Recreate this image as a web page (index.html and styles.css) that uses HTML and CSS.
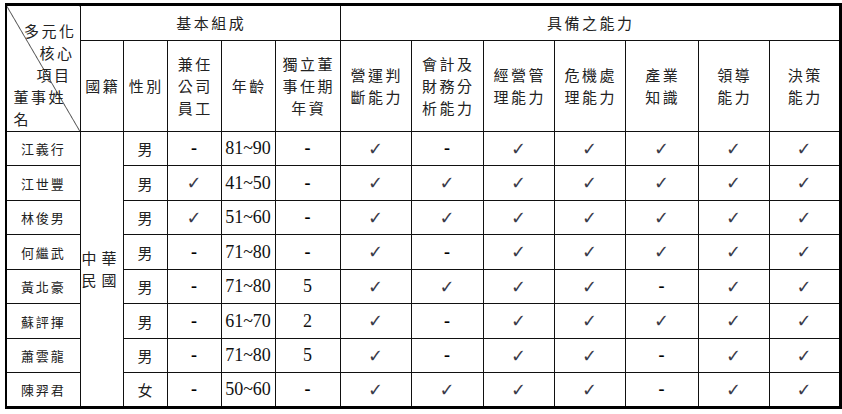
FILE: index.html
```html
<!DOCTYPE html>
<html lang="zh-Hant">
<head>
<meta charset="utf-8">
<title>董事會成員多元化</title>
<link rel="stylesheet" href="styles.css">
</head>
<body>
<div class="page">
<table class="board">
<colgroup>
<col class="w74"><col class="w43"><col class="w44"><col class="w54"><col class="w54"><col class="w65">
<col class="w71"><col class="w72"><col class="w71"><col class="w71"><col class="w73"><col class="w71"><col class="w71">
</colgroup>
<thead>
<tr class="hr1">
<th rowspan="2" class="diag"><div class="diag-text"><span class="r">多元化</span><span class="r r2">核心</span><span class="r r3">項目</span><span class="l">董事姓</span><span class="l">名</span></div></th>
<th colspan="5" class="grp">基本組成</th>
<th colspan="7" class="grp">具備之能力</th>
</tr>
<tr class="hr2">
<th class="gray">國籍</th>
<th>性別</th>
<th>兼任<br>公司<br>員工</th>
<th>年齡</th>
<th>獨立董<br>事任期<br>年資</th>
<th class="gray">營運判<br>斷能力</th>
<th class="gray">會計及<br>財務分<br>析能力</th>
<th>經營管<br>理能力</th>
<th class="gray">危機處<br>理能力</th>
<th>產業<br>知識</th>
<th>領導<br>能力</th>
<th>決策<br>能力</th>
</tr>
</thead>
<tbody>
<tr class="r34"><td class="name">江義行</td><td rowspan="8" class="nation">中華<br>民國</td><td class="cjk">男</td><td class="dash">-</td><td class="num">81~90</td><td class="dash">-</td><td class="chk gray">✓</td><td class="dash gray">-</td><td class="chk">✓</td><td class="chk gray">✓</td><td class="chk">✓</td><td class="chk">✓</td><td class="chk">✓</td></tr>
<tr class="r35"><td class="name">江世豐</td><td class="cjk">男</td><td class="chk">✓</td><td class="num">41~50</td><td class="dash">-</td><td class="chk gray">✓</td><td class="chk gray">✓</td><td class="chk">✓</td><td class="chk gray">✓</td><td class="chk">✓</td><td class="chk">✓</td><td class="chk">✓</td></tr>
<tr class="r34"><td class="name">林俊男</td><td class="cjk">男</td><td class="chk">✓</td><td class="num">51~60</td><td class="dash">-</td><td class="chk gray">✓</td><td class="chk gray">✓</td><td class="chk">✓</td><td class="chk gray">✓</td><td class="chk">✓</td><td class="chk">✓</td><td class="chk">✓</td></tr>
<tr class="r35"><td class="name">何繼武</td><td class="cjk">男</td><td class="dash">-</td><td class="num">71~80</td><td class="dash">-</td><td class="chk gray">✓</td><td class="dash gray">-</td><td class="chk">✓</td><td class="chk gray">✓</td><td class="chk">✓</td><td class="chk">✓</td><td class="chk">✓</td></tr>
<tr class="r34"><td class="name">黃北豪</td><td class="cjk">男</td><td class="dash">-</td><td class="num">71~80</td><td class="num">5</td><td class="chk gray">✓</td><td class="chk gray">✓</td><td class="chk">✓</td><td class="chk gray">✓</td><td class="dash">-</td><td class="chk">✓</td><td class="chk">✓</td></tr>
<tr class="r35"><td class="name">蘇評揮</td><td class="cjk">男</td><td class="dash">-</td><td class="num">61~70</td><td class="num">2</td><td class="chk gray">✓</td><td class="dash gray">-</td><td class="chk">✓</td><td class="chk gray">✓</td><td class="chk">✓</td><td class="chk">✓</td><td class="chk">✓</td></tr>
<tr class="r34"><td class="name">蕭雲龍</td><td class="cjk">男</td><td class="dash">-</td><td class="num">71~80</td><td class="num">5</td><td class="chk gray">✓</td><td class="dash gray">-</td><td class="chk">✓</td><td class="chk gray">✓</td><td class="dash">-</td><td class="chk">✓</td><td class="chk">✓</td></tr>
<tr class="r35"><td class="name">陳羿君</td><td class="cjk">女</td><td class="dash">-</td><td class="num">50~60</td><td class="dash">-</td><td class="chk gray">✓</td><td class="chk gray">✓</td><td class="chk">✓</td><td class="chk gray">✓</td><td class="dash">-</td><td class="chk">✓</td><td class="chk">✓</td></tr>
</tbody>
</table>
</div>
</body>
</html>
```

FILE: styles.css
```css
html, body {
  margin: 0;
  padding: 0;
  background: #ffffff;
}

.page {
  padding: 3px 0 0 5px;
}

.board {
  border-collapse: collapse;
  table-layout: fixed;
  width: 834px;
  border-top: 3px solid #000;
  border-bottom: 3px solid #000;
  border-right: 3px solid #000;
  border-left: 2px solid #000;
  font-family: "Noto Sans CJK TC", "Noto Sans CJK SC", sans-serif;
  color: #222;
}

.w74 { width: 74px; }
.w43 { width: 43px; }
.w44 { width: 44px; }
.w54 { width: 54px; }
.w65 { width: 65px; }
.w71 { width: 71px; }
.w72 { width: 72px; }
.w73 { width: 73px; }

.board th,
.board td {
  border: 1px solid #111;
  padding: 0;
  text-align: center;
  vertical-align: middle;
  overflow: hidden;
}

.board th {
  font-weight: 400;
  font-size: 15px;
  line-height: 22px;
  letter-spacing: 2.5px;
  padding-left: 2.5px;
}

.board .gray {
  border-left-color: #8a8a8a;
}

.hr1 { height: 36px; }
.hr2 { height: 91px; }
.r34 { height: 34px; }
.r35 { height: 35px; }

.grp {
  letter-spacing: 4px;
}

.diag {
  border-right-color: #9a9a9a;
  background: linear-gradient(to top right, transparent calc(50% - 0.7px), #222 50%, transparent calc(50% + 0.7px));
  vertical-align: top;
}

.diag-text {
  display: flex;
  flex-direction: column;
  padding: 12px 3px 0 4px;
  line-height: 22px;
  letter-spacing: 2.5px;
}

.diag-text .r {
  text-align: right;
}

.diag-text .r2 { padding-right: 2px; }
.diag-text .r3 { padding-right: 5px; }

.diag-text .l {
  text-align: left;
}

.name {
  font-size: 13px;
  letter-spacing: 1.8px;
  padding-left: 1.8px;
}

.nation {
  font-size: 15px;
  line-height: 22px;
  letter-spacing: 5px;
  padding-left: 5px;
  border-left-color: #9a9a9a;
  border-right-color: #222;
}

.cjk {
  font-size: 15px;
}

.num {
  font-family: "Liberation Serif", "Times New Roman", serif;
  font-size: 18px;
  color: #111;
}

.dash {
  font-family: "Liberation Serif", "Times New Roman", serif;
  font-size: 18px;
  font-weight: 700;
  color: #000;
}

.chk {
  font-family: "DejaVu Sans", sans-serif;
  font-size: 18px;
  line-height: 1;
  color: #3a3a48;
}
```
